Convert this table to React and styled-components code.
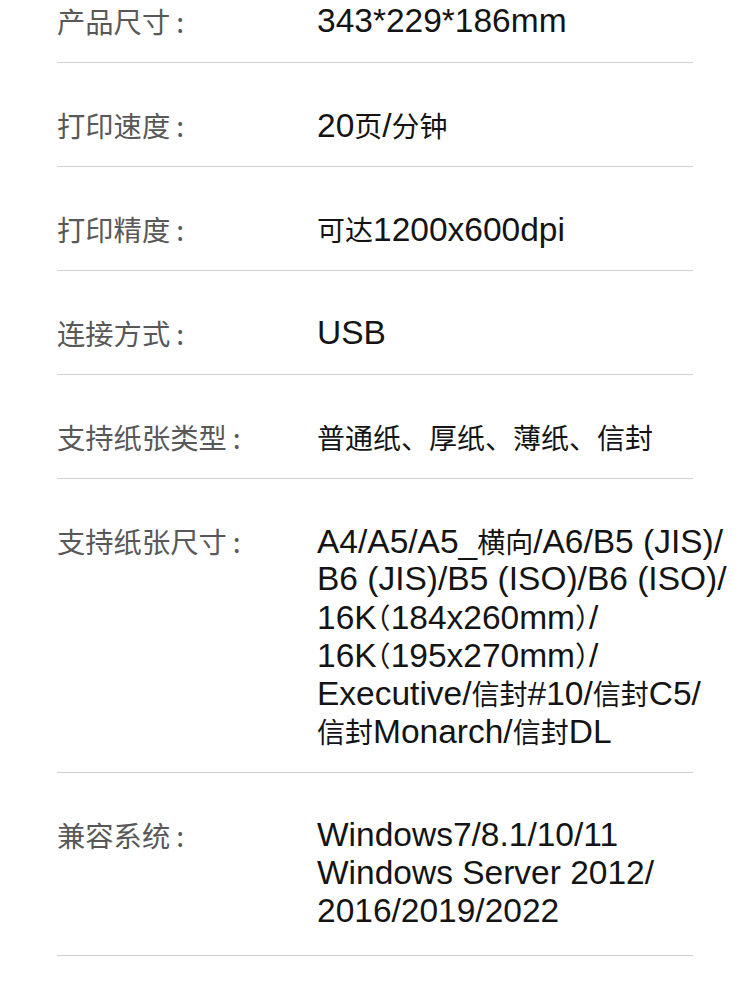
import React from "react"
import styled, {createGlobalStyle} from "styled-components"

const GlobalStyle = createGlobalStyle`
    html, body {
        margin: 0;
        padding: 0;
        background: #fff;
    }
    body {
        font-family: "Liberation Sans", "Noto Sans CJK SC", sans-serif;
        overflow: hidden;
    }
`

const Page = styled.div`
    width: 750px;
    height: 1000px;
    padding: 0 57px;
    box-sizing: border-box;
    background: #fff;
`

const Row = styled.div`
    display: flex;
    align-items: flex-start;
    width: 636px;
    padding: ${props => props.first ? "2px" : "43px"} 0 ${props => props.last ? "25px" : "22px"};
    border-bottom: 1px solid #cfcfcf;
`

const Label = styled.div`
    flex: 0 0 260px;
    font-family: "Noto Sans CJK SC", "Liberation Sans", sans-serif;
    font-size: 28.3px;
    line-height: 38px;
    color: #585858;
    white-space: nowrap;
`

const Colon = styled.span`
    margin-left: 6px;
`

const Value = styled.div`
    flex: 1;
    font-family: "Liberation Sans", "Noto Sans CJK SC", sans-serif;
    font-size: 33.5px;
    line-height: 38px;
    color: #141414;
    white-space: nowrap;
`

const Line = styled.div`
    height: 38px;
`

// 中文字符比西文字号小一些，全角括号用半宽
const Cjk = styled.span`
    font-family: "Noto Sans CJK SC", sans-serif;
    font-size: 28px;
    line-height: 38px;
    font-feature-settings: ${props => props.half ? '"halt"' : "normal"};
`

const CJK_RE = /[\u3000-\u303f\u4e00-\u9fff\uff00-\uffef]/

const Mixed = ({text}) => (
    <>
        {text.split(/([\u3000-\u303f\u4e00-\u9fff\uff00-\uffef]+)/).map((part, i) =>
            CJK_RE.test(part)
                ? <Cjk key={i} half={/[（）]/.test(part)}>{part}</Cjk>
                : part
        )}
    </>
)

const specs = [
    {label: "产品尺寸", lines: ["343*229*186mm"]},
    {label: "打印速度", lines: ["20页/分钟"]},
    {label: "打印精度", lines: ["可达1200x600dpi"]},
    {label: "连接方式", lines: ["USB"]},
    {label: "支持纸张类型", lines: ["普通纸、厚纸、薄纸、信封"]},
    {
        label: "支持纸张尺寸",
        lines: [
            "A4/A5/A5_横向/A6/B5 (JIS)/",
            "B6 (JIS)/B5 (ISO)/B6 (ISO)/",
            "16K（184x260mm）/",
            "16K（195x270mm）/",
            "Executive/信封#10/信封C5/",
            "信封Monarch/信封DL"
        ]
    },
    {
        label: "兼容系统",
        lines: ["Windows7/8.1/10/11", "Windows Server 2012/", "2016/2019/2022"]
    }
]

export default function App() {
    return (
        <>
            <GlobalStyle/>
            <Page>
                {specs.map((item, index) => (
                    <Row key={item.label} first={index === 0} last={index === specs.length - 1}>
                        <Label>{item.label}<Colon>:</Colon></Label>
                        <Value>
                            {item.lines.map(line => (
                                <Line key={line}><Mixed text={line}/></Line>
                            ))}
                        </Value>
                    </Row>
                ))}
            </Page>
        </>
    )
}
